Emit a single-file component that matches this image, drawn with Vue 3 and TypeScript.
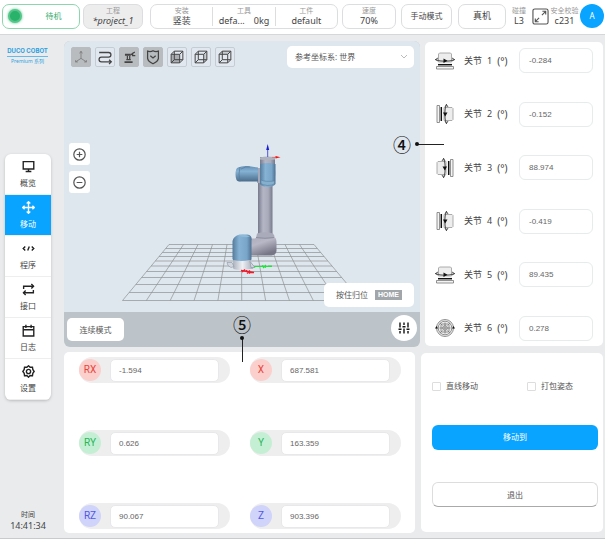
<script setup lang="ts">
import { ref } from 'vue'

interface NavItem { label: string; paths: string[]; active?: boolean }
interface Joint { id: number; value: string; kind: 'up' | 'left' | 'right' | 'front' }
interface Axis { name: string; value: string; tone: 'red' | 'green' | 'blue' }

const nav: NavItem[] = [
  { label: '概览', paths: ['M1.5 2h13v9h-13z', 'M8 11v3', 'M4.5 14.2h7'] },
  {
    label: '移动',
    active: true,
    paths: ['M8 1v14', 'M1 8h14', 'M5.8 3.2 8 1l2.200 2.200', 'M5.800 12.800 8 15l2.200-2.200', 'M3.200 5.800 1 8l2.200 2.200', 'M12.800 5.800 15 8l-2.200 2.200'],
  },
  { label: '程序', paths: ['M4 5.500 1.500 8 4 10.500', 'M12 5.500l2.500 2.500-2.500 2.500', 'M9 5.500l-2 5'] },
  { label: '接口', paths: ['M2 7.500V4h12', 'M11.500 1.200 14.200 4l-2.700 2.800', 'M14 8.500V12H2', 'M4.500 9.200 1.800 12l2.700 2.800'] },
  { label: '日志', paths: ['M1.500 3.200h13v11.600h-13z', 'M1.500 7h13', 'M4.800 1v4', 'M11.200 1v4'] },
  {
    label: '设置',
    paths: ['M8 1l2 1.800 2.900-.2.400 2.900L15 8l-1.700 2.300-.4 2.900-2.900-.2L8 15l-2-2-2.900.2-.4-2.900L1 8l1.700-2.500.4-2.900 2.900.2z', 'M8 5.400a2.600 2.600 0 1 0 0 5.200a2.600 2.600 0 1 0 0-5.200z'],
  },
]

const joints = ref<Joint[]>([
  { id: 1, value: '-0.284', kind: 'up' },
  { id: 2, value: '-0.152', kind: 'left' },
  { id: 3, value: '88.974', kind: 'right' },
  { id: 4, value: '-0.419', kind: 'left' },
  { id: 5, value: '89.435', kind: 'up' },
  { id: 6, value: '0.278', kind: 'front' },
])

const axes = ref<Axis[]>([
  { name: 'RX', value: '-1.594', tone: 'red' },
  { name: 'X', value: '687.581', tone: 'red' },
  { name: 'RY', value: '0.626', tone: 'green' },
  { name: 'Y', value: '163.359', tone: 'green' },
  { name: 'RZ', value: '90.067', tone: 'blue' },
  { name: 'Z', value: '903.396', tone: 'blue' },
])

const turn: Record<string, string> = {
  up: '',
  left: 'rotate(90 10 10)',
  right: 'translate(20 0) scale(-1 1) rotate(90 10 10)',
}

// Floor of the 3D scene: ten columns fanning out towards the viewer
const columns = Array.from({ length: 11 }, (_, i) => ({
  top: 105 + i * 14.5,
  bottom: 58.5 + i * 23.85,
}))
const rowYs = [203.5, 207.5, 211.5, 215.5, 220, 225, 230.5, 236.5, 243.5, 251.5, 259.5]
const rows = rowYs.map((y) => {
  const t = (y - 203.5) / 56
  return { y, left: 105 - 46.5 * t, right: 250 + 47 * t }
})
const straight = ref(false)
const packed = ref(false)
</script>

<template>
  <div class="page">
    <header class="topbar">
      <button class="pill state"><span class="lamp"></span><span class="state-text">待机</span></button>
      <button class="pill stack project"><small>工程</small><em>*project_1</em></button>
      <div class="pill group">
        <div class="stack"><small>安装</small><span>竖装</span></div>
        <div class="stack"><small>工具</small><span class="pair"><i>defa...</i><i>0kg</i></span></div>
        <div class="stack"><small>工件</small><span>default</span></div>
      </div>
      <button class="pill stack speed"><small>速度</small><span>70%</span></button>
      <button class="pill mode">手动模式</button>
      <button class="pill real">真机</button>
      <div class="stack crash"><small>碰撞</small><span>L3</span></div>
      <button class="expand" aria-label="全屏">
        <svg viewBox="0 0 18 18"><rect x="1" y="1" width="16" height="16" rx="2" /><path d="M10.500 7.500 14.500 3.500M11 3.500h3.500V7M7.500 10.500l-4 4M3.500 11v3.500H7" /></svg>
      </button>
      <div class="stack check"><small>安全校验</small><span>c231</span></div>
      <button class="avatar">A</button>
    </header>

    <div class="body">
      <aside class="side">
        <div class="logo"><strong>DUCO COBOT</strong><span>Premium 系列</span></div>
        <nav class="nav">
          <a v-for="n in nav" :key="n.label" href="#" :class="{ active: n.active }">
            <svg viewBox="0 0 16 16"><path v-for="p in n.paths" :key="p" :d="p" /></svg>
            <span>{{ n.label }}</span>
          </a>
        </nav>
        <div class="clock"><span>时间</span><time>14:41:34</time></div>
      </aside>

      <main class="main">
        <div class="upper">
          <section class="viewer">
            <div class="stage">
              <svg class="scene" viewBox="0 0 356 271" preserveAspectRatio="xMidYMax meet">
                <defs>
                  <linearGradient id="blueV"><stop offset="0" stop-color="#557b9b" /><stop offset=".35" stop-color="#86b3d5" /><stop offset=".75" stop-color="#78a5c8" /><stop offset="1" stop-color="#4d7090" /></linearGradient>
                  <linearGradient id="blueH" x2="0" y2="1"><stop offset="0" stop-color="#6792b5" /><stop offset=".35" stop-color="#85b1d3" /><stop offset="1" stop-color="#4b6d8c" /></linearGradient>
                  <linearGradient id="tube"><stop offset="0" stop-color="#777a8c" /><stop offset=".35" stop-color="#b4b6c5" /><stop offset=".7" stop-color="#a9abbb" /><stop offset="1" stop-color="#777a8b" /></linearGradient>
                  <linearGradient id="elbow" x2=".5" y2="1"><stop offset="0" stop-color="#aaa9b9" /><stop offset=".45" stop-color="#b9b8c6" /><stop offset="1" stop-color="#777687" /></linearGradient>
                  <linearGradient id="foot"><stop offset="0" stop-color="#a8aeba" /><stop offset=".45" stop-color="#eef0f5" /><stop offset="1" stop-color="#9ca2af" /></linearGradient>
                </defs>
                <g class="floor">
                  <line v-for="c in columns" :key="c.top" :x1="c.top" y1="203.5" :x2="c.bottom" y2="259.5" />
                  <line v-for="r in rows" :key="r.y" :x1="r.left" :y1="r.y" :x2="r.right" :y2="r.y" />
                </g>
                <path d="M194 140h14.500v56H194z" fill="url(#tube)" />
                <path d="M196 116h15v10h-15z" fill="url(#tube)" />
                <path d="M196 116.500q7.500-2 15 0v2q-7.500 1.500-15 0z" fill="#aeb2bf" />
                <path d="M193 127h5v15h-5zM210 126q2 3 1 10h-1z" fill="#a5a8b8" />
                <path d="M174 126.500q4-2 10-1.500l10 1.500v14H175q-3.500-.5-3.500-7t2.500-7z" fill="url(#blueH)" />
                <path d="M176 126q-2 7 0 14.500M177 128q5-3 9-2" fill="none" stroke="#567b9b" stroke-width=".7" />
                <path d="M196 123q7.500-2 15.500 0v20q-2 3-8 3-6-.5-7.500-3z" fill="url(#blueV)" />
                <path d="M197 139q4 2 13.500 1v2.500q-1.500 2-7 2-5-.5-6.500-2z" fill="#86aecd" stroke="#577d9d" stroke-width=".6" />
                <path d="M185 197.500h6l3-2.500h15q3.500 1.500 3.500 6v9q-.5 4-5 4.500H185z" fill="url(#elbow)" />
                <path d="M193 192.500q8-2.500 16 0 2 2 1 4.500-8 2-18 0z" fill="#a9aaba" />
                <path d="M192 196.500q9 1.500 18 0" fill="none" stroke="#828596" stroke-width=".7" />
                <path d="M168.500 200q1-5 7-6.500h8q5 1 4 6v19l-3 2.500h-14l-2-3z" fill="url(#blueV)" />
                <path d="M174 194.500q6-2 12 1-6 2-12-1z" fill="#8ebada" />
                <path d="M169.500 219q8 2 16 0l5 7-2 2h-4q-8 2-15 0l-1-3z" fill="url(#foot)" />
                <path d="M163 221.500h5l2 4-3 1-3-2zM186 220.500l5 6h-4z" fill="#d2d6df" stroke="#8c93a1" stroke-width=".6" />
                <path d="M203.700 116V108" stroke="#4044df" stroke-width=".9" /><path d="m203.700 103 1.500 6h-3z" fill="#151bd6" />
                <path d="M208 116.300h5" stroke="#e06b6b" stroke-width=".8" /><path d="m216.500 116.300-5 1.300v-2.600z" fill="#ee1717" />
                <path d="M190 225.500h18M198 224.500l4 2M202 224l-3 3M204 225h4" stroke="#22e33d" stroke-width="1.100" />
                <path d="M177 229.500l13 2M178 231l3-2.500M182 229.500l4 3M186 229.500l-3 3M185 231.500h5" stroke="#f31b29" stroke-width="1.300" />
              </svg>
              <div class="stage-top">
                <div class="tools">
                  <button class="on" aria-label="坐标轴"><svg viewBox="0 0 20 20"><path class="thin" d="M10 4v7.500L4 15.500M10 11.500l6 4M8.500 6 10 3.500 11.500 6M4 13.500v2h2.500M16 13.500v2h-2.500" /></svg></button>
                  <button aria-label="轨迹"><svg viewBox="0 0 20 20"><path d="M3.500 5h10.500a2.600 2.600 0 0 1 0 5.200H6a2.600 2.600 0 0 0 0 5.200h11M14.500 13l2.500 2.400-2.500 2.400" /></svg></button>
                  <button class="on" aria-label="模型"><svg viewBox="0 0 20 20"><path class="bulk" d="M5 15.700h9" /><path d="M7 13h5M8.200 13V8.500M10.800 13V8.500M12 7.500l2-1.500M16.500 4.500 14 6v2.500h3" /><path class="bulk" d="M5.500 7.500H12" /></svg></button>
                  <button class="on" aria-label="安全"><svg viewBox="0 0 20 20"><path d="M4 3.500q3.500 1 6-.5 2.500 1.500 6 .5v8q-.5 3.500-6 6-5.500-2.500-6-6zM7 8.500l3 2.500 3-2.500" /></svg></button>
                  <button aria-label="正视"><svg viewBox="0 0 20 20"><path class="shade" d="M3.500 7h9.500v9.500H3.500z" /><path class="cube" d="M3.500 7h9.500v9.500H3.500zM7 3.500h9.500V13H7zM3.500 7 7 3.500M13 7l3.500-3.500M13 16.500l3.500-3.500M3.500 16.500 7 13" /></svg></button>
                  <button aria-label="侧视"><svg viewBox="0 0 20 20"><path class="shade light" d="m13 7 3.500-3.500V13L13 16.500z" /><path class="cube" d="M3.500 7h9.500v9.500H3.500zM7 3.500h9.500V13H7zM3.500 7 7 3.500M13 7l3.500-3.500M13 16.500l3.500-3.500M3.500 16.500 7 13" /></svg></button>
                  <button aria-label="俯视"><svg viewBox="0 0 20 20"><path class="shade light" d="M3.500 7 7 3.500h9.500L13 7z" /><path class="cube" d="M3.500 7h9.500v9.500H3.500zM7 3.500h9.500V13H7zM3.500 7 7 3.500M13 7l3.500-3.500M13 16.500l3.500-3.500M3.500 16.500 7 13" /></svg></button>
                </div>
                <div class="frame">
                  <select aria-label="参考坐标系"><option>参考坐标系: 世界</option></select>
                  <svg viewBox="0 0 8 6"><path d="m1 1 3 3 3-3" /></svg>
                </div>
              </div>
              <div class="zoomers">
                <button aria-label="放大"><svg viewBox="0 0 16 16"><circle cx="8" cy="8" r="7" /><path d="M4.500 8h7M8 4.500v7" /></svg></button>
                <button aria-label="缩小"><svg viewBox="0 0 16 16"><circle cx="8" cy="8" r="7" /><path d="M4.500 8h7" /></svg></button>
              </div>
              <button class="home">按住归位 <b>HOME</b></button>
            </div>
            <div class="strip">
              <button class="continuous">连续模式</button>
              <button class="tune" aria-label="参数">
                <svg viewBox="0 0 12 12"><path d="M2 .5v5M2 9v2.500M6 .5V3M6 6.500v5M10 .5v5M10 9v2.500M.5 7.200h3M4.500 4.700h3M8.500 7.200h3" /></svg>
              </button>
            </div>
          </section>

          <section class="joints">
            <div v-for="j in joints" :key="j.id" class="joint">
              <svg class="joint-icon" viewBox="0 0 20 20">
                <g v-if="j.kind !== 'front'" :transform="turn[j.kind]">
                  <path d="M3.500 3 4.500 2h11l1 1v8h-13z" fill="#ededed" stroke="#999" stroke-width=".8" />
                  <path d="M0 8.500Q10 12 20 8.500M3 7 .5 8.500 3 10M17 7l2.500 1.500L17 10" fill="none" stroke="#444" stroke-width=".9" />
                  <path d="M8.500 7.500v4.500l4-2.200z" fill="#111" />
                  <path d="M3 13.700h14" stroke="#111" stroke-width="1.500" />
                  <path d="M1.500 15.500h17v2.500h-17z" fill="#f4f4f4" stroke="#777" stroke-width=".8" />
                </g>
                <g v-else fill="none" stroke="#777" stroke-width=".8">
                  <circle cx="10" cy="10" r="8.500" fill="#eee" /><circle cx="10" cy="10" r="6.800" />
                  <rect x="6" y="6" width="8" height="8" rx="1" /><circle cx="10" cy="10" r="2.300" />
                  <path d="M10 4.500v11M4.500 10h11M5 5l2.500 2.500M15 5l-2.500 2.500M5 15l2.500-2.500M15 15l-2.500-2.500" />
                  <path d="M0 10.500 1.500 8 3 10.500zM17 10.500 18.500 8l1.500 2.500z" fill="#111" stroke="none" />
                </g>
              </svg>
              <label :for="`joint-${j.id}`"><span>关节</span><span>{{ j.id }}</span><span class="unit">(°)</span></label>
              <input :id="`joint-${j.id}`" v-model="j.value" type="text" />
            </div>
            <div class="note note-side"><span>④</span><i></i></div>
          </section>
        </div>

        <div class="lower">
          <section class="pose">
            <div v-for="a in axes" :key="a.name" class="axis">
              <label :for="`axis-${a.name}`" :class="a.tone">{{ a.name }}</label>
              <input :id="`axis-${a.name}`" v-model="a.value" type="text" />
            </div>
            <div class="note note-down"><span>⑤</span><i></i></div>
          </section>
          <section class="actions">
            <div class="options">
              <label><input v-model="straight" type="checkbox" />直线移动</label>
              <label><input v-model="packed" type="checkbox" />打包姿态</label>
            </div>
            <button class="go">移动到</button>
            <button class="quit">退出</button>
          </section>
        </div>
      </main>
    </div>
  </div>
</template>

<style>
body {
  margin: 0;
}
</style>

<style scoped>
.page {
  min-height: 100vh;
  box-sizing: border-box;
  display: flex;
  flex-direction: column;
  background: #e9ebed;
  border-bottom: 1px solid #c8cbce;
  color: #444;
  font: 8px/12px "Noto Sans", "Noto Sans CJK SC", sans-serif;
}
.page *,
.page *::before {
  box-sizing: border-box;
}
button,
input,
select {
  margin: 0;
  padding: 0;
  border: 0;
  background: #fff;
  color: inherit;
  font: inherit;
}
svg {
  display: block;
  fill: none;
}

/* Top bar */
.topbar {
  display: flex;
  align-items: center;
  height: 35px;
  padding: 0 1px 2px 2px;
  background: #fff;
  border-bottom: 1px solid #d5d7d9;
  white-space: nowrap;
}
.pill {
  height: 25px;
  border: 1px solid #dcdddf;
  border-radius: 7px;
}
.stack {
  display: flex;
  flex-direction: column;
  align-items: center;
  justify-content: center;
  font-size: 9px;
  line-height: 11px;
}
.stack small {
  font-size: 7px;
  line-height: 9px;
  color: #999;
}
.state {
  width: 78px;
  display: flex;
  align-items: center;
  padding-left: 5px;
  border-color: #8ed5ae;
  color: #32ad70;
}
.lamp {
  width: 14px;
  height: 14px;
  border: 2px solid #56c58a;
  border-radius: 50%;
  background: #28b26a;
  box-shadow: 0 0 3px #55c78b;
}
.state-text {
  flex: 1;
  padding-left: 6px;
  text-align: center;
}
.project {
  width: 60px;
  margin-left: 3px;
  background: #ededee;
}
.group {
  flex: 1;
  display: flex;
  align-items: center;
  margin: 0 4px 0 7px;
}
.group .stack {
  flex: 1;
}
.group .stack + .stack {
  border-left: 1px solid #ddd;
}
.group .stack small {
  margin-top: -1px;
}
.pair {
  display: flex;
  gap: 9px;
}
.pair i {
  font-style: normal;
}
.speed {
  width: 54px;
}
.mode {
  width: 51px;
  margin: 0 6px 0 5px;
}
.real {
  width: 48px;
  font-size: 9px;
}
.crash {
  width: 26px;
}
.expand {
  width: 17px;
  height: 17px;
}
.expand svg {
  stroke: #555;
  stroke-width: 1.2;
}
.check {
  width: 31px;
}
.avatar {
  width: 24px;
  height: 24px;
  border-radius: 50%;
  background: #08a4ff;
  color: #fff;
}

/* Frame */
.body {
  flex: 1;
  display: flex;
  padding: 6px 2px 5px 0;
}
.side {
  width: 64px;
  display: flex;
  flex-direction: column;
  align-items: flex-start;
}
.logo {
  width: 39px;
  margin: 5px 0 0 8px;
  display: flex;
  flex-direction: column;
  align-items: center;
  color: #2b9fe0;
  white-space: nowrap;
}
.logo strong {
  border-bottom: 1px solid #69b9e6;
  font: 700 6px/10px Inter, sans-serif;
}
.logo span {
  font-size: 5px;
  line-height: 9px;
}
.nav {
  width: 46px;
  margin: 88px 0 auto 5px;
  border-radius: 6px;
  overflow: hidden;
  background: #fff;
  box-shadow: 0 1px 3px #bbb;
}
.nav a {
  height: 41px;
  display: flex;
  flex-direction: column;
  align-items: center;
  justify-content: center;
  gap: 4px;
  border-bottom: 1px solid #eee;
  color: #444;
  text-decoration: none;
}
.nav svg {
  width: 13px;
  height: 13px;
  stroke: #222;
  stroke-width: 1.7;
}
.nav .active {
  background: #08a4ff;
  color: #fff;
}
.nav .active svg {
  stroke: #fff;
}
.clock {
  width: 56px;
  display: flex;
  flex-direction: column;
  align-items: center;
  padding-bottom: 2px;
  font-size: 7px;
  line-height: 11px;
}
.clock time {
  font-size: 9px;
}
.main {
  flex: 1;
  min-width: 0;
  display: grid;
  grid-template-rows: 306fr 181fr;
  gap: 5px;
}
.upper,
.lower {
  display: flex;
  gap: 5px;
}
.lower {
  gap: 6px;
}

/* 3D viewer */
.viewer {
  flex: 1;
  display: flex;
  flex-direction: column;
  border-radius: 6px;
  overflow: hidden;
  background: #bcc4ca;
}
.stage {
  position: relative;
  flex: 1;
  display: flex;
  flex-direction: column;
  padding: 5px 6px;
  background: #dfe7ee;
}
.scene {
  position: absolute;
  inset: 0;
  width: 100%;
  height: 100%;
}
.floor {
  stroke: #8d9092;
  stroke-width: 0.7;
}
.stage-top {
  position: relative;
  display: flex;
  justify-content: space-between;
  align-items: center;
}
.tools {
  display: flex;
  gap: 4px;
  padding-left: 1px;
}
.tools button {
  width: 20px;
  height: 20px;
  border: 1px solid #c6ccd3;
  border-radius: 2px;
  background: #e2e8ef;
}
.tools .on {
  background: #b9bcbf;
  border-color: #b9bcbf;
}
.tools svg {
  stroke: #444;
  stroke-width: 1.4;
}
.tools .thin {
  stroke: #777;
  stroke-width: 0.9;
}
.tools .bulk {
  stroke-width: 2;
}
.tools .cube {
  stroke-width: 1.1;
}
.tools .shade {
  fill: #aaaeb3;
  stroke: none;
}
.tools .light {
  fill: #c8cdd3;
}
.frame {
  position: relative;
  width: 127px;
}
.frame select {
  width: 100%;
  height: 22px;
  padding-left: 8px;
  border-radius: 5px;
  appearance: none;
  color: #555;
}
.frame svg {
  position: absolute;
  right: 6px;
  top: 8px;
  width: 8px;
  height: 6px;
  stroke: #aaa;
  stroke-width: 0.8;
}
.zoomers {
  position: relative;
  display: flex;
  flex-direction: column;
  align-items: flex-start;
  gap: 6px;
  margin: 75px 0 auto -1px;
}
.zoomers button {
  width: 21px;
  height: 22px;
  padding: 0 4px;
  border-radius: 3px;
}
.zoomers svg {
  stroke: #555;
  stroke-width: 1.5;
}
.home {
  position: relative;
  align-self: flex-end;
  width: 90px;
  height: 24px;
  border-radius: 5px;
  display: flex;
  align-items: center;
  justify-content: center;
  gap: 7px;
  color: #555;
}
.home b {
  padding: 0 3px;
  background: #a1a6aa;
  color: #fff;
  font: bold 7px/10px "Liberation Sans", sans-serif;
}
.strip {
  height: 35px;
  display: flex;
  align-items: center;
  justify-content: space-between;
  padding: 0 3px;
}
.continuous {
  width: 57px;
  height: 23px;
  border-radius: 5px;
  color: #555;
}
.tune {
  width: 26px;
  height: 26px;
  margin-bottom: 4px;
  padding: 7px;
  border-radius: 50%;
}
.tune svg {
  stroke: #111;
  stroke-width: 1.4;
}

/* Joints */
.joints {
  position: relative;
  width: 178px;
  margin: 1px 0;
  padding: 6px 10px 5px;
  display: flex;
  flex-direction: column;
  justify-content: space-between;
  border-radius: 5px;
  background: #fff;
}
.joint {
  display: flex;
  align-items: center;
}
.joint-icon {
  width: 20px;
  height: 20px;
}
.joint label {
  flex: 1;
  display: flex;
  gap: 5px;
  padding-left: 9px;
  font-size: 9px;
  white-space: nowrap;
}
.joint .unit {
  font-size: 10px;
}
.joint input {
  width: 74px;
  height: 25px;
  padding-left: 9px;
  border: 1px solid #e6ebec;
  border-radius: 6px;
}
.joint input,
.axis input {
  color: #666;
  font-family: "Liberation Sans", sans-serif;
}

/* Pose */
.pose {
  position: relative;
  flex: 1;
  display: grid;
  grid-template-columns: 1fr 1fr;
  align-content: space-between;
  column-gap: 20px;
  padding: 5px 14px 4px 15px;
  border-radius: 5px;
  background: #fff;
}
.axis {
  height: 26px;
  display: flex;
  align-items: center;
  justify-content: space-between;
  padding: 0 11px 0 0;
  border-radius: 13px;
  background: #eee;
}
.axis label {
  width: 22px;
  height: 22px;
  border-radius: 50%;
  font: 10px/22px Roboto, sans-serif;
  text-align: center;
}
.axis .red {
  background: #fbcfcc;
  color: #e8453d;
}
.axis .green {
  background: #c5efd4;
  color: #25b558;
}
.axis .blue {
  background: #d0d3fa;
  color: #5058df;
}
.axis input {
  width: 109px;
  height: 23px;
  padding-left: 8px;
  border: 1px solid #e8e8eb;
  border-radius: 5px;
}

/* Actions */
.actions {
  width: 182px;
  margin: 1px 0;
  padding: 27px 5px 25px 11px;
  display: flex;
  flex-direction: column;
  justify-content: space-between;
  border-radius: 5px;
  background: #fff;
  color: #555;
}
.options {
  display: grid;
  grid-template-columns: 95px 1fr;
}
.options label {
  display: flex;
  align-items: center;
  gap: 5px;
}
.options input {
  appearance: none;
  width: 9px;
  height: 9px;
  border: 1px solid #ddd;
  border-radius: 1px;
}
.go,
.quit {
  height: 25px;
  border-radius: 6px;
}
.go {
  background: #08a4ff;
  color: #fff;
}
.quit {
  border: 1px solid #ddd;
  border-bottom-color: #aaa;
}

/* Callouts laid over the panels */
.note {
  position: absolute;
  display: flex;
  align-items: center;
  color: #111;
}
.note span {
  width: 18px;
  font: 500 18px/18px "Noto Sans CJK SC", sans-serif;
}
.note i {
  position: relative;
  background: #222;
}
.note i::before {
  content: "";
  position: absolute;
  width: 4px;
  height: 4px;
  border-radius: 50%;
  background: #111;
}
.note-side {
  left: -32px;
  top: 93px;
  gap: 5px;
}
.note-side i {
  width: 28px;
  height: 1px;
}
.note-side i::before {
  top: -2px;
  left: -1px;
}
.note-down {
  left: 169px;
  top: -37px;
  flex-direction: column;
  gap: 4px;
}
.note-down i {
  width: 1px;
  height: 25px;
}
.note-down i::before {
  left: -2px;
  top: -1px;
}
</style>
